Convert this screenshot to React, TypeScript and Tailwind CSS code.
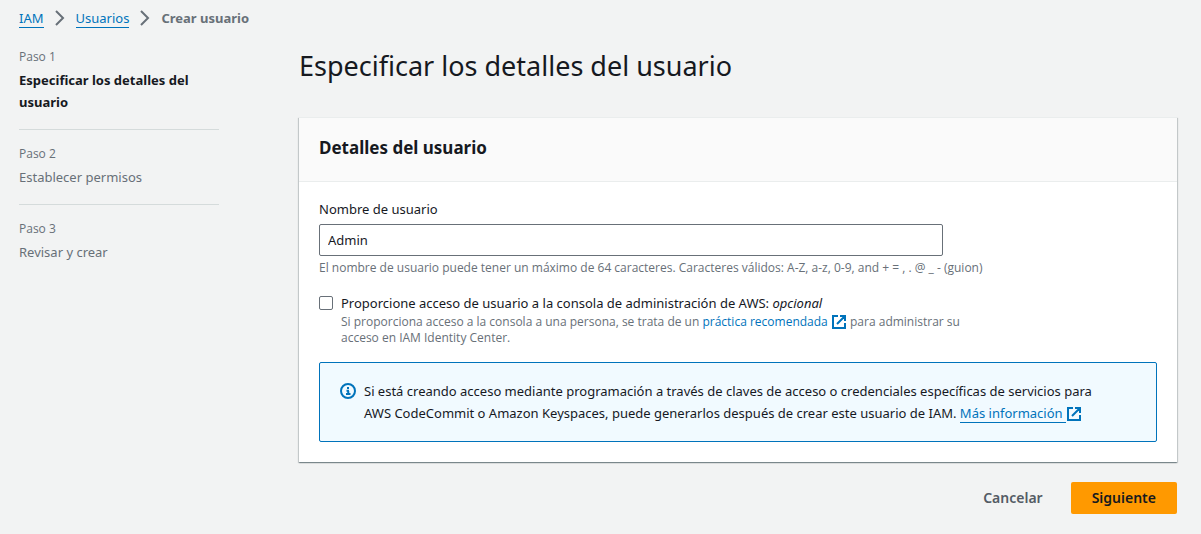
import type { ReactNode } from 'react';

const steps = [
  { label: 'Paso 1', title: 'Especificar los detalles del usuario', current: true },
  { label: 'Paso 2', title: 'Establecer permisos', current: false },
  { label: 'Paso 3', title: 'Revisar y crear', current: false },
];

function Chevron() {
  return (
    <svg aria-hidden="true" viewBox="0 0 16 16" className="size-4 shrink-0 fill-none stroke-[#687078] stroke-2">
      <path d="M4 1l7 7-7 7" />
    </svg>
  );
}

function ExternalIcon() {
  return (
    <svg aria-hidden="true" viewBox="0 0 16 16" className="inline-block size-4 fill-none stroke-[#0073bb] stroke-2 align-text-bottom">
      <path d="M14 9v5H2V2h5M9 2h5v5M6 10l7.5-7.5" />
    </svg>
  );
}

function InfoIcon() {
  return (
    <svg aria-hidden="true" viewBox="0 0 16 16" className="mt-[3px] size-4 shrink-0 fill-none stroke-[#0073bb] stroke-2">
      <circle cx="8" cy="8" r="7" />
      <path d="M6 11h4.500M8.250 12V8M6.500 7.750H9M7 5h2" />
    </svg>
  );
}

function Crumb({ children }: { children: ReactNode }) {
  return (
    <a href="#" className="border-b border-[#0073bb] leading-[18px] text-[#0073bb]">
      {children}
    </a>
  );
}

export default function App() {
  return (
    <div className="min-h-screen bg-[#f2f3f3] pt-[7px] pr-6 pb-5 pl-[19px] font-['Noto_Sans',sans-serif] text-[13px] leading-[22px] text-[#16191f]">
      <nav aria-label="Ruta" className="flex items-center gap-2">
        <Crumb>IAM</Crumb>
        <Chevron />
        <Crumb>Usuarios</Crumb>
        <Chevron />
        <span className="font-bold text-[#687078]">Crear usuario</span>
      </nav>

      <div className="flex gap-20">
        <aside className="w-[200px] shrink-0 pt-[17px]">
          <ol className="divide-y divide-[#d5dbdb]">
            {steps.map((s) => (
              <li key={s.label} className="pb-4 [&+li]:pt-[13px]">
                <div className="font-['Open_Sans',sans-serif] text-xs leading-[22px] text-[#687078]">{s.label}</div>
                <div className={s.current ? 'mt-px font-bold' : 'mt-px text-[#687078]'}>{s.title}</div>
              </li>
            ))}
          </ol>
        </aside>

        <main className="min-w-0 flex-1 pt-[19px]">
          <h1 className="text-[27px] leading-9">Especificar los detalles del usuario</h1>

          <form onSubmit={(e) => e.preventDefault()}>
            <section className="mt-[33px] border-t border-[#eaeded] bg-white shadow-[0_1px_1px_0_rgba(0,28,36,0.3),1px_1px_1px_0_rgba(0,28,36,0.15),-1px_1px_1px_0_rgba(0,28,36,0.15)]">
              <h2 className="border-b border-[#eaeded] bg-[#fafafa] px-5 pt-[18px] pb-[21px] text-[17px] leading-6 font-bold">
                Detalles del usuario
              </h2>
              <div className="px-5 pt-4 pb-5">
                <div className="max-w-[680px]">
                  <label htmlFor="username" className="block">Nombre de usuario</label>
                  <input
                    id="username"
                    defaultValue="Admin"
                    className="mt-1 block h-8 w-[624px] max-w-full rounded-xs border border-[#687078] bg-white px-2 outline-none"
                  />
                  <p className="mt-1 font-['Open_Sans',sans-serif] text-xs leading-4 text-[#687078]">
                    El nombre de usuario puede tener un máximo de 64 caracteres. Caracteres válidos: A-Z, a-z, 0-9, and + = , . @ _ - (guion)
                  </p>
                </div>

                <div className="mt-4 flex max-w-[650px] gap-2">
                  <input
                    id="console"
                    type="checkbox"
                    className="mt-1 size-[14px] shrink-0 appearance-none rounded-xs border border-[#687078] bg-white checked:bg-[#0073bb]"
                  />
                  <div>
                    <label htmlFor="console" className="block">
                      Proporcione acceso de usuario a la consola de administración de AWS: <em>opcional</em>
                    </label>
                    <p className="font-['Open_Sans',sans-serif] text-xs leading-4 text-[#687078]">
                      Si proporciona acceso a la consola a una persona, se trata de un{' '}
                      <a href="#" className="text-[#0073bb]">práctica recomendada <ExternalIcon /></a> para administrar su acceso en IAM Identity Center.
                    </p>
                  </div>
                </div>

                <div className="mt-4 flex gap-2 rounded-xs border border-[#0073bb] bg-[#f1faff] py-[17px] pr-10 pl-5">
                  <InfoIcon />
                  <p>
                    Si está creando acceso mediante programación a través de claves de acceso o credenciales específicas de servicios para AWS CodeCommit o Amazon Keyspaces, puede generarlos después de crear este usuario de IAM.{' '}
                    <a href="#" className="text-[#0073bb]"><span className="border-b border-[#0073bb]">Más información </span><ExternalIcon /></a>
                  </p>
                </div>
              </div>
            </section>

            <div className="mt-5 flex justify-end gap-2 text-sm font-semibold">
              <button type="button" className="h-8 px-5 text-[#545b64]">Cancelar</button>
              <button type="submit" className="h-8 rounded-xs bg-[#ff9900] px-[21px]">Siguiente</button>
            </div>
          </form>
        </main>
      </div>
    </div>
  );
}
